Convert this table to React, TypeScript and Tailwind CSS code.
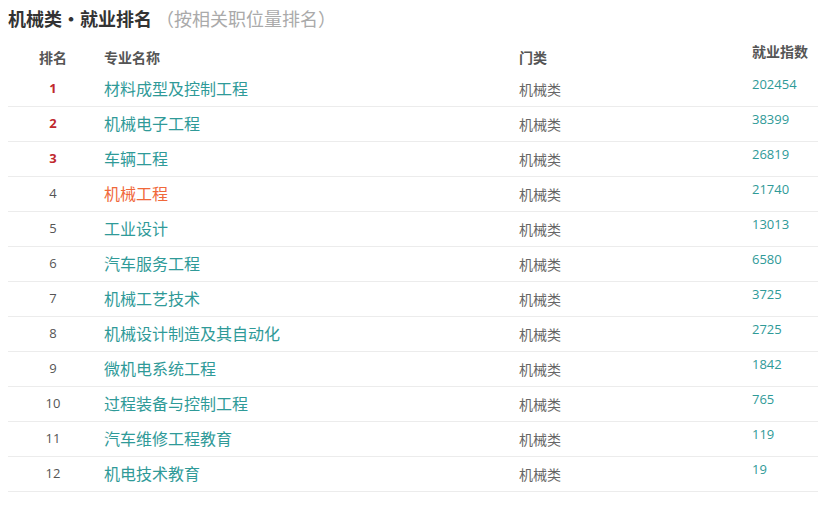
const rows = [
  { rank: 1, name: '材料成型及控制工程', index: '202454' },
  { rank: 2, name: '机械电子工程', index: '38399' },
  { rank: 3, name: '车辆工程', index: '26819' },
  { rank: 4, name: '机械工程', index: '21740', active: true },
  { rank: 5, name: '工业设计', index: '13013' },
  { rank: 6, name: '汽车服务工程', index: '6580' },
  { rank: 7, name: '机械工艺技术', index: '3725' },
  { rank: 8, name: '机械设计制造及其自动化', index: '2725' },
  { rank: 9, name: '微机电系统工程', index: '1842' },
  { rank: 10, name: '过程装备与控制工程', index: '765' },
  { rank: 11, name: '汽车维修工程教育', index: '119' },
  { rank: 12, name: '机电技术教育', index: '19' },
];

export default function App() {
  return (
    <div className="w-[828px] h-[508px] bg-white pl-[8px] pt-[6px] font-['Open_Sans','Noto_Sans_CJK_SC',sans-serif]">
      {/* Title */}
      <div className="flex items-baseline h-[24px] font-['Noto_Sans_CJK_SC',sans-serif]">
        <span className="text-[18px] leading-[24px] font-bold text-[#333]">机械类・就业排名</span>
        <span className="ml-[4px] text-[18px] leading-[24px] text-[#aaa]">（按相关职位量排名）</span>
      </div>

      <div className="w-[810px] mt-[9px]">
        {/* Header */}
        <div className="flex h-[33px] text-[14px] leading-[18px] font-bold text-[#555]">
          <div className="w-[90px] pt-[10px] text-center">排名</div>
          <div className="w-[415px] pt-[10px] pl-[6px]">专业名称</div>
          <div className="w-[233px] pt-[10px] pl-[6px]">门类</div>
          <div className="flex-1 pt-[4px] pl-[6px]">就业指数</div>
        </div>

        {/* Rows */}
        {rows.map((r) => (
          <div key={r.rank} className="flex h-[35px] border-b border-[#ececec]">
            <div
              className={`w-[90px] flex items-center justify-center text-[13px] ${
                r.rank <= 3 ? 'font-bold text-[#c0282e]' : 'text-[#555]'
              }`}
            >
              {r.rank}
            </div>
            <div
              className={`w-[415px] flex items-center pl-[6px] text-[16px] ${
                r.active ? 'text-[#f0683a]' : 'text-[#2f9a98]'
              }`}
            >
              {r.name}
            </div>
            <div className="w-[233px] flex items-center pl-[6px] text-[14px] text-[#666]">机械类</div>
            <div className="flex-1 pl-[6px] pt-[3px] text-[13px] leading-[18px] text-[#2f9a98]">{r.index}</div>
          </div>
        ))}
      </div>
    </div>
  );
}
